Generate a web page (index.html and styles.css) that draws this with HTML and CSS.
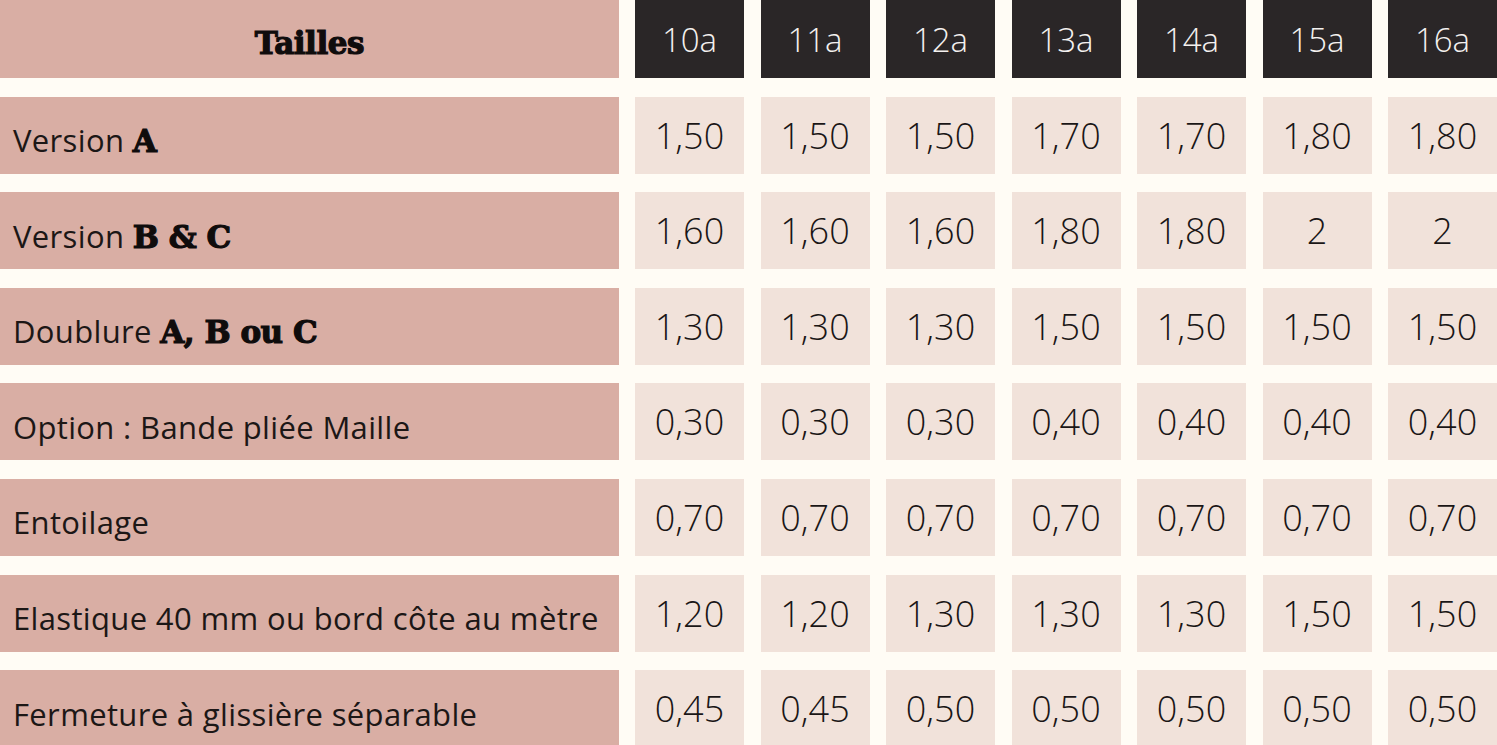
FILE: index.html
```html
<!DOCTYPE html>
<html lang="fr">
<head>
<meta charset="utf-8">
<title>Tailles</title>
<link rel="stylesheet" href="styles.css">
</head>
<body>
<div class="table">
  <div class="label head"><span class="txt"><span class="serif">Tailles</span></span></div>
  <div class="size">10a</div><div class="size">11a</div><div class="size">12a</div><div class="size">13a</div><div class="size">14a</div><div class="size">15a</div><div class="size">16a</div>

  <div class="label"><span class="txt">Version <span class="serif">A</span></span></div>
  <div class="cell">1,50</div><div class="cell">1,50</div><div class="cell">1,50</div><div class="cell">1,70</div><div class="cell">1,70</div><div class="cell">1,80</div><div class="cell">1,80</div>

  <div class="label"><span class="txt">Version <span class="serif">B &amp; C</span></span></div>
  <div class="cell">1,60</div><div class="cell">1,60</div><div class="cell">1,60</div><div class="cell">1,80</div><div class="cell">1,80</div><div class="cell">2</div><div class="cell">2</div>

  <div class="label"><span class="txt">Doublure <span class="serif">A, B ou C</span></span></div>
  <div class="cell">1,30</div><div class="cell">1,30</div><div class="cell">1,30</div><div class="cell">1,50</div><div class="cell">1,50</div><div class="cell">1,50</div><div class="cell">1,50</div>

  <div class="label"><span class="txt">Option : Bande pliée Maille</span></div>
  <div class="cell">0,30</div><div class="cell">0,30</div><div class="cell">0,30</div><div class="cell">0,40</div><div class="cell">0,40</div><div class="cell">0,40</div><div class="cell">0,40</div>

  <div class="label"><span class="txt">Entoilage</span></div>
  <div class="cell">0,70</div><div class="cell">0,70</div><div class="cell">0,70</div><div class="cell">0,70</div><div class="cell">0,70</div><div class="cell">0,70</div><div class="cell">0,70</div>

  <div class="label"><span class="txt">Elastique 40 mm ou bord côte au mètre</span></div>
  <div class="cell">1,20</div><div class="cell">1,20</div><div class="cell">1,30</div><div class="cell">1,30</div><div class="cell">1,30</div><div class="cell">1,50</div><div class="cell">1,50</div>

  <div class="label"><span class="txt">Fermeture à glissière séparable</span></div>
  <div class="cell">0,45</div><div class="cell">0,45</div><div class="cell">0,50</div><div class="cell">0,50</div><div class="cell">0,50</div><div class="cell">0,50</div><div class="cell">0,50</div>
</div>
</body>
</html>
```

FILE: styles.css
```css
html, body {
  margin: 0;
  padding: 0;
  background: #fffcf5;
  overflow: hidden;
}

.table {
  display: grid;
  grid-template-columns: 618.5px repeat(7, 109px);
  grid-template-rows: 78px repeat(7, 77px);
  column-gap: 16.5px;
  row-gap: 18.6px;
  width: 1497px;
}

.label {
  background: #d9aea4;
  color: #1c1716;
  font-family: "Open Sans", "Liberation Sans", sans-serif;
  font-weight: 400;
  font-size: 31px;
  letter-spacing: 0.35px;
  display: flex;
  align-items: center;
  padding-left: 13px;
  padding-top: 10px;
  white-space: nowrap;
}

.label.head {
  justify-content: center;
  padding-left: 0;
  padding-top: 6px;
}

.serif {
  font-family: "DejaVu Serif", "Liberation Serif", serif;
  font-weight: bold;
  font-size: 31px;
  letter-spacing: -0.5px;
  color: #0f0c0c;
  -webkit-text-stroke: 1.2px #0f0c0c;
}

.size {
  background: #2a2627;
  color: #f4f1ef;
  font-family: "Open Sans", "Liberation Sans", sans-serif;
  font-weight: 300;
  font-size: 33px;
  display: flex;
  align-items: center;
  justify-content: center;
}

.cell {
  background: #f1e2da;
  color: #1a1616;
  font-family: "Open Sans", "Liberation Sans", sans-serif;
  font-weight: 300;
  font-size: 36px;
  display: flex;
  align-items: center;
  justify-content: center;
}
```
